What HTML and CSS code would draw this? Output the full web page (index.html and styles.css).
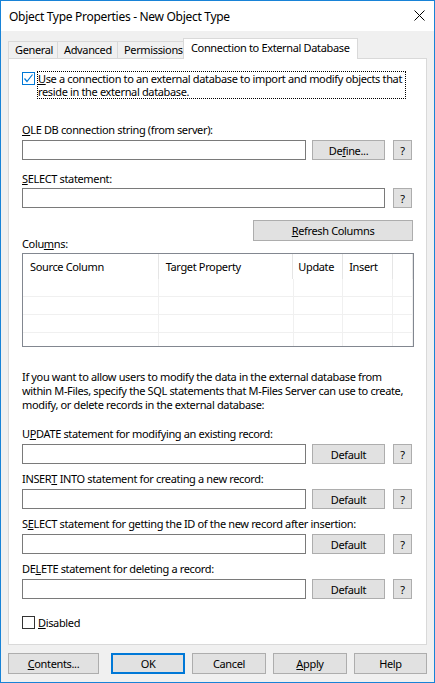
FILE: index.html
```html
<!DOCTYPE html>
<html>
<head>
<meta charset="utf-8">
<link rel="stylesheet" href="styles.css">
</head>
<body>
<div class="window">
  <div class="titlebar">
    <span class="title">Object Type Properties - New Object Type</span>
    <svg class="close" width="11" height="11" viewBox="0 0 11 11"><path d="M0.5 0.5 L10.5 10.5 M10.5 0.5 L0.5 10.5" stroke="#000" stroke-width="1" fill="none"/></svg>
  </div>
  <div class="client">
    <div class="tabs">
      <div class="tab t-general">General</div>
      <div class="tab t-advanced">Advanced</div>
      <div class="tab t-perm">Permissions</div>
      <div class="tab t-conn active">Connection to External Database</div>
    </div>
    <div class="panel">
      <div class="check-row">
        <span class="cb checked"><svg width="11" height="11" viewBox="0 0 11 11"><path d="M1.5 5.5 L4 8.5 L9.5 1.5" stroke="#0078d7" stroke-width="1.2" fill="none"/></svg></span>
        <span class="focus-label"><u>U</u>se a connection to an external database to import and modify objects that reside in the external database.</span>
      </div>

      <div class="label l-ole"><u>O</u>LE DB connection string (from server):</div>
      <div class="field-row">
        <div class="input"></div>
        <div class="btn btn-define">De<u>f</u>ine...</div>
        <div class="btn btn-q">?</div>
      </div>

      <div class="label l-select"><u>S</u>ELECT statement:</div>
      <div class="field-row fr-select">
        <div class="input"></div>
        <div class="btn btn-q">?</div>
      </div>

      <div class="columns-head">
        <div class="label l-columns">Colu<u>m</u>ns:</div>
        <div class="btn btn-refresh"><u>R</u>efresh Columns</div>
      </div>

      <div class="table">
        <div class="thead">
          <div class="th c1">Source Column</div>
          <div class="th c2">Target Property</div>
          <div class="th c3">Update</div>
          <div class="th c4">Insert</div>
          <div class="th c5"></div>
        </div>
        <div class="trow"><div class="td c1"></div><div class="td c2"></div><div class="td c3"></div><div class="td c4"></div><div class="td c5"></div></div>
        <div class="trow"><div class="td c1"></div><div class="td c2"></div><div class="td c3"></div><div class="td c4"></div><div class="td c5"></div></div>
        <div class="trow"><div class="td c1"></div><div class="td c2"></div><div class="td c3"></div><div class="td c4"></div><div class="td c5"></div></div>
        <div class="trow"><div class="td c1"></div><div class="td c2"></div><div class="td c3"></div><div class="td c4"></div><div class="td c5"></div></div>
      </div>

      <p class="para">If you want to allow users to modify the data in the external database from<br>within M-Files, specify the SQL statements that M-Files Server can use to create,<br>modify, or delete records in the external database:</p>

      <div class="label l-stmt l-first">U<u>P</u>DATE statement for modifying an existing record:</div>
      <div class="field-row">
        <div class="input"></div>
        <div class="btn btn-define">Default</div>
        <div class="btn btn-q">?</div>
      </div>

      <div class="label l-stmt">INSER<u>T</u> INTO statement for creating a new record:</div>
      <div class="field-row">
        <div class="input"></div>
        <div class="btn btn-define">Default</div>
        <div class="btn btn-q">?</div>
      </div>

      <div class="label l-stmt">S<u>E</u>LECT statement for getting the ID of the new record after insertion:</div>
      <div class="field-row">
        <div class="input"></div>
        <div class="btn btn-define">Default</div>
        <div class="btn btn-q">?</div>
      </div>

      <div class="label l-stmt">DE<u>L</u>ETE statement for deleting a record:</div>
      <div class="field-row">
        <div class="input"></div>
        <div class="btn btn-define">Default</div>
        <div class="btn btn-q">?</div>
      </div>

      <div class="disabled-row">
        <span class="cb"></span>
        <span class="dis-label"><u>D</u>isabled</span>
      </div>
    </div>
    <div class="buttons">
      <div class="btn b-contents"><u>C</u>ontents...</div>
      <div class="btn b-ok">OK</div>
      <div class="btn b-cancel">Cancel</div>
      <div class="btn b-apply"><u>A</u>pply</div>
      <div class="btn b-help">Help</div>
    </div>
  </div>
</div>
</body>
</html>
```
FILE: styles.css
```css
* { box-sizing: border-box; }
html, body { margin: 0; padding: 0; }
body {
  font-family: "Noto Sans", "Open Sans", sans-serif;
  font-size: 11px;
  letter-spacing: -0.35px;
  color: #000;
  background: #f0f0f0;
}
u { text-decoration: underline; text-underline-offset: 1px; }

.window {
  width: 435px;
  height: 683px;
  border: 1px solid #1883d7;
  background: #f0f0f0;
  overflow: hidden;
}
.titlebar {
  height: 30px;
  background: #fff;
  display: flex;
  align-items: center;
  padding-left: 8px;
  padding-right: 9px;
  justify-content: space-between;
}
.title { font-size: 12px; letter-spacing: -0.3px; }
.close { display: block; margin-top: -1px; }

.client { padding: 7px 7px 0 7px; }

.tabs {
  display: flex;
  align-items: flex-end;
  height: 20px;
}
.tab {
  height: 17px;
  border: 1px solid #d9d9d9;
  border-bottom: none;
  margin-right: -1px;
  background: #f0f0f0;
  line-height: 16px;
  padding-left: 6px;
  white-space: nowrap;
}
.t-general { width: 50px; }
.t-advanced { width: 61px; }
.t-perm { width: 67px; }
.t-conn { width: 175px; }
.tab.active {
  height: 21px;
  margin-bottom: -1px;
  background: #fff;
  position: relative;
  z-index: 1;
  padding-left: 7px;
  line-height: 18px;
}

.panel {
  height: 587px;
  border: 1px solid #d9d9d9;
  background: #fff;
  padding: 0 12px 0 13px;
}

.check-row {
  display: flex;
  align-items: flex-start;
  margin-top: 12px;
}
.cb {
  width: 13px;
  height: 13px;
  border: 1px solid #333;
  background: #fff;
  flex: none;
  display: flex;
  align-items: center;
  justify-content: center;
}
.cb.checked { border-color: #0078d7; margin-top: 1px; }
.cb svg { display: block; }
.focus-label {
  margin-left: 2px;
  width: 369px;
  border: 1px dotted #000;
  line-height: 13px;
}

.label { line-height: 13px; white-space: nowrap; }
.l-ole { margin-top: 24px; }
.l-select { margin-top: 12px; }

.field-row {
  display: flex;
  height: 20px;
  margin-top: 4px;
  padding-right: 2px;
}
.fr-select { margin-top: 3px; }
.input {
  flex: 1;
  border: 1px solid #7a7a7a;
  background: #fff;
}
.btn {
  border: 1px solid #adadad;
  background: #e1e1e1;
  display: flex;
  align-items: center;
  justify-content: center;
  white-space: nowrap;
}
.btn-define { width: 73px; margin-left: 6px; }
.btn-q { width: 19px; margin-left: 8px; }

.columns-head {
  margin-top: 12px;
  height: 30px;
  display: flex;
  justify-content: space-between;
  align-items: flex-start;
  padding-right: 1px;
}
.l-columns { align-self: flex-end; }
.btn-refresh { width: 160px; height: 21px; }

.table {
  margin-top: 3px;
  height: 94px;
  border: 1px solid #828790;
  overflow: hidden;
}
.thead { display: flex; height: 25px; }
.th {
  border-right: 1px solid #e5e5e5;
  padding-left: 7px;
  line-height: 25px;
  white-space: nowrap;
}
.trow { display: flex; height: 18px; }
.td {
  border-right: 1px solid #f0f0f0;
  border-bottom: 1px solid #f0f0f0;
}
.c1 { width: 136px; }
.c2 { width: 135px; }
.c3 { width: 50px; padding-left: 5px; }
.c4 { width: 50px; padding-left: 6px; }
.c5 { width: 20px; }
.td.c1 { width: 137px; }
.td.c2 { width: 135px; }

.para {
  margin: 23px 0 0 0;
  line-height: 14px;
  white-space: nowrap;
}

.l-stmt { margin-top: 8px; }
.l-first { margin-top: 15px; }

.disabled-row {
  display: flex;
  align-items: center;
  margin-top: 17px;
  height: 13px;
}
.dis-label { margin-left: 3px; line-height: 13px; }

.buttons {
  display: flex;
  margin-top: 8px;
  height: 21px;
}
.b-contents { width: 91px; }
.b-ok { width: 74px; margin-left: 12px; border: 2px solid #0078d7; }
.b-cancel { width: 74px; margin-left: 7px; }
.b-apply { width: 74px; margin-left: 7px; }
.b-help { width: 73px; margin-left: 7px; }
```
